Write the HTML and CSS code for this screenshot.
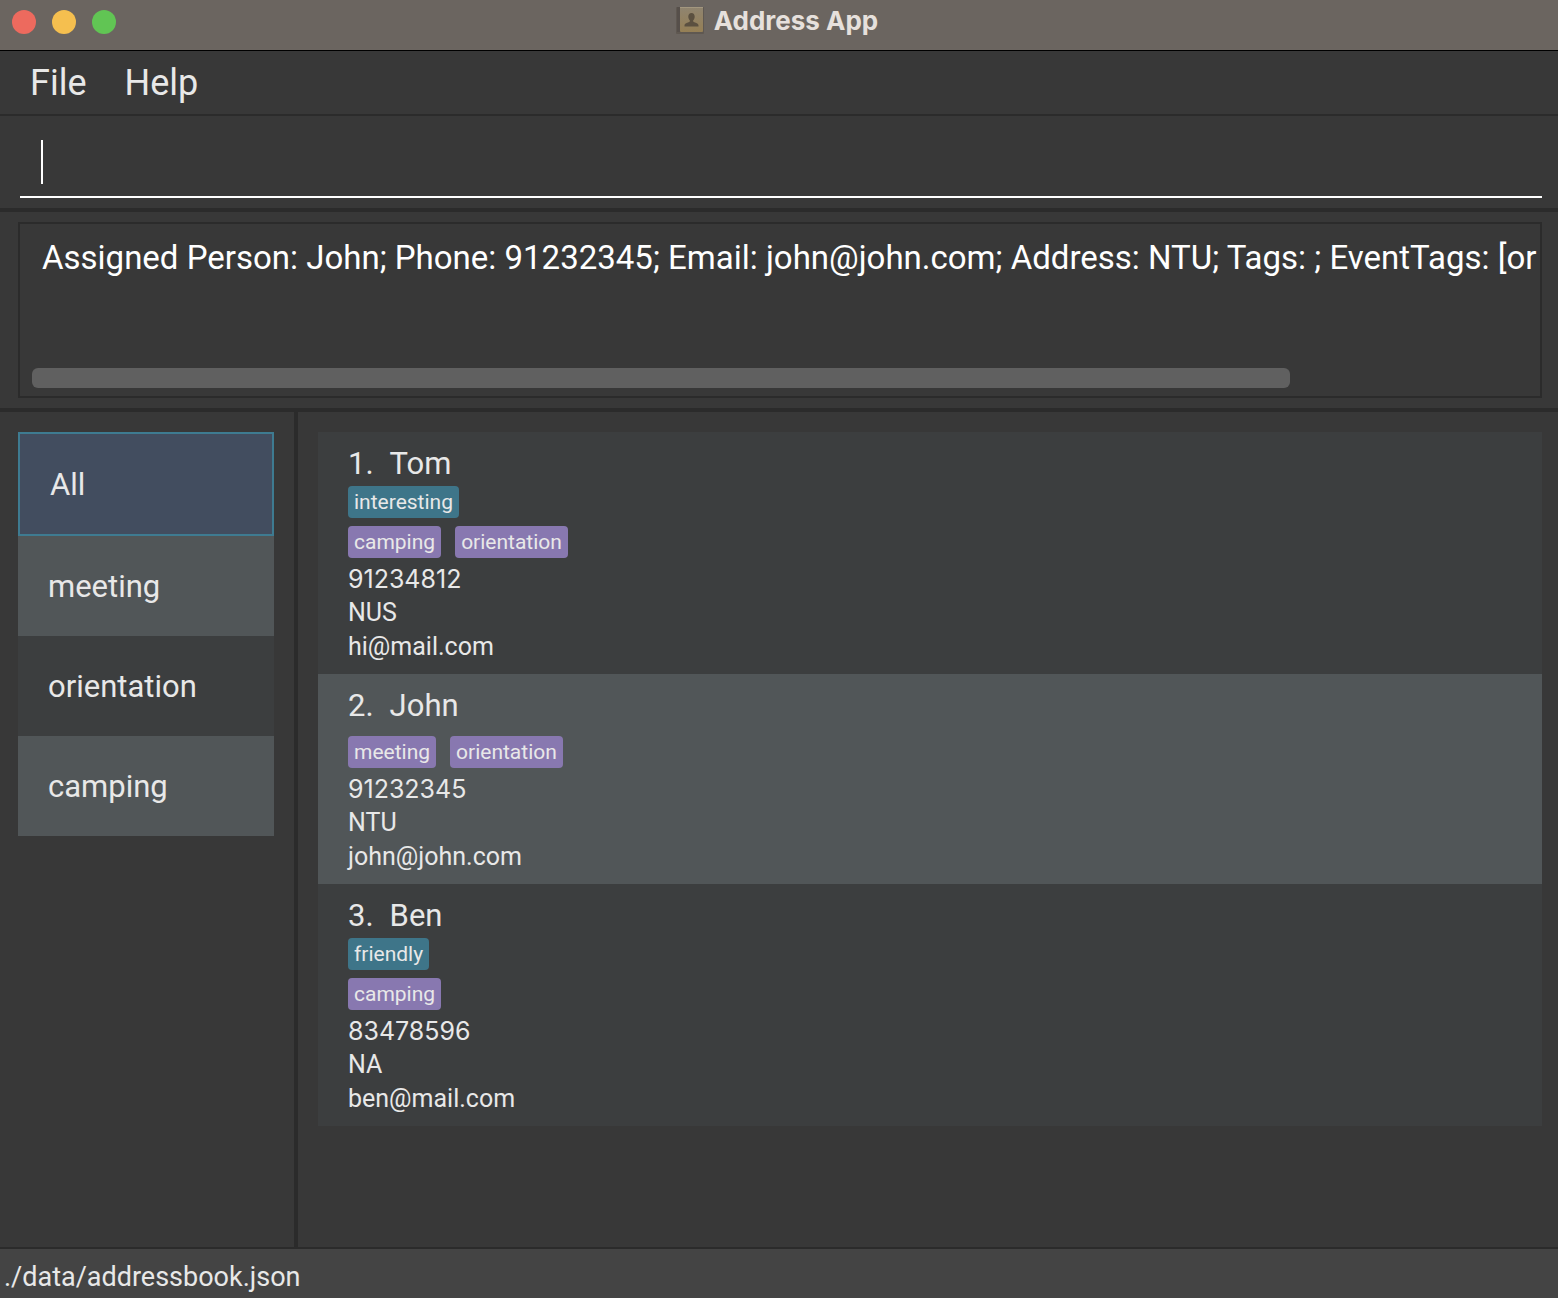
FILE: index.html
```html
<!DOCTYPE html>
<html lang="en">
<head>
<meta charset="utf-8">
<title>Address App</title>
<link rel="stylesheet" href="styles.css">
</head>
<body>
<div class="window">
  <header class="titlebar">
    <div class="lights">
      <button class="light light-close" type="button" aria-label="Close"></button>
      <button class="light light-minimise" type="button" aria-label="Minimise"></button>
      <button class="light light-zoom" type="button" aria-label="Zoom"></button>
    </div>
    <h1 class="title">
      <svg class="app-icon" viewBox="0 0 30 28" aria-hidden="true">
        <defs>
          <linearGradient id="cover" x1="0" y1="0" x2="0" y2="1">
            <stop offset="0" stop-color="#8f8470"/>
            <stop offset="1" stop-color="#957f55"/>
          </linearGradient>
        </defs>
        <rect x="0" y="0" width="28" height="27" rx="1" fill="#5f5851"/>
        <rect x="1" y="0" width="4" height="25" fill="#564f4a"/>
        <rect x="4" y="0" width="23" height="25" rx="1" fill="url(#cover)"/>
        <rect x="4" y="0" width="23" height="1" fill="#a3977f"/>
        <path d="M15.500 6c2 0 3.200 1.500 3.200 3.700 0 1.600-.7 2.800-1.500 3.600v1.300c0 .9 5.300 1.100 5.300 3.900v1H8.500v-1c0-2.800 5.300-3 5.300-3.900v-1.300c-.8-.8-1.500-2-1.500-3.600C12.300 7.500 13.500 6 15.500 6z" fill="#5b5040"/>
      </svg>
      Address App
    </h1>
  </header>

  <nav class="menubar">
    <button class="menu" type="button">File</button>
    <button class="menu" type="button">Help</button>
  </nav>

  <section class="command">
    <input class="command-input" type="text" aria-label="Command">
    <span class="caret"></span>
  </section>

  <section class="result">
    <div class="result-box">
      <p class="result-text">Assigned Person: John; Phone: 91232345; Email: john@john.com; Address: NTU; Tags: ; EventTags: [orientation, meeting]</p>
      <div class="scroll-track"><div class="scroll-thumb"></div></div>
    </div>
  </section>

  <main class="panes">
    <aside class="events">
      <ul class="list">
        <li><button class="event event-selected" type="button">All</button></li>
        <li><button class="event" type="button">meeting</button></li>
        <li><button class="event" type="button">orientation</button></li>
        <li><button class="event" type="button">camping</button></li>
      </ul>
    </aside>
    <section class="people">
      <ul class="list">
        <li class="person">
          <h2 class="name"><span>1.</span><span>Tom</span></h2>
          <div class="tags"><span class="tag">interesting</span></div>
          <div class="tags event-tags"><span class="tag">camping</span><span class="tag">orientation</span></div>
          <p class="detail phone">91234812</p>
          <p class="detail">NUS</p>
          <p class="detail">hi@mail.com</p>
        </li>
        <li class="person">
          <h2 class="name"><span>2.</span><span>John</span></h2>
          <div class="tags"></div>
          <div class="tags event-tags"><span class="tag">meeting</span><span class="tag">orientation</span></div>
          <p class="detail phone">91232345</p>
          <p class="detail">NTU</p>
          <p class="detail">john@john.com</p>
        </li>
        <li class="person">
          <h2 class="name"><span>3.</span><span>Ben</span></h2>
          <div class="tags"><span class="tag">friendly</span></div>
          <div class="tags event-tags"><span class="tag">camping</span></div>
          <p class="detail phone">83478596</p>
          <p class="detail">NA</p>
          <p class="detail">ben@mail.com</p>
        </li>
      </ul>
    </section>
  </main>

  <footer class="status">./data/addressbook.json</footer>
</div>
</body>
</html>
```
FILE: styles.css
```css
* {
  box-sizing: border-box;
}

body {
  margin: 0;
  background: #383838;
  color: #e8e8e8;
  font-family: Roboto, "Liberation Sans", sans-serif;
  font-weight: 400;
}

h1, h2, p, ul {
  margin: 0;
  padding: 0;
  font-weight: inherit;
}

button, input {
  border: 0;
  padding: 0;
  background: none;
  color: inherit;
  font: inherit;
}

.window {
  display: flex;
  flex-direction: column;
  min-height: 100vh;
}

.titlebar {
  display: grid;
  grid-template-columns: 1fr auto 1fr;
  align-items: center;
  height: 51px;
  padding: 0 12px 8px;
  border-bottom: 1px solid #000;
  background: #6b6560;
}

.lights {
  display: flex;
  gap: 16px;
  padding-top: 2px;
}

.light {
  width: 24px;
  height: 24px;
  border-radius: 50%;
}

.light-close { background: #ed6a5e; }
.light-minimise { background: #f5bf4f; }
.light-zoom { background: #61c554; }

.title {
  display: flex;
  align-items: center;
  gap: 8px;
  padding-right: 4px;
  color: #e6e0dc;
  font-family: Inter, "Liberation Sans", sans-serif;
  font-size: 26px;
  font-weight: 700;
  line-height: 32px;
}

.app-icon {
  width: 30px;
  height: 28px;
}

.menubar {
  display: flex;
  gap: 38px;
  height: 65px;
  padding: 0 30px;
  border-bottom: 2px solid #2b2b2b;
}

.menu {
  font-size: 36px;
}

.command {
  position: relative;
  padding: 12px 16px 10px 20px;
  border-bottom: 4px solid #2b2b2b;
}

.command-input {
  display: block;
  width: 100%;
  height: 70px;
  padding: 0 20px;
  border-bottom: 2px solid #fff;
  outline: 0;
  color: #fff;
  font-size: 33px;
}

.caret {
  position: absolute;
  top: 24px;
  left: 41px;
  width: 2px;
  height: 44px;
  background: #fff;
}

.result {
  padding: 10px 16px 10px 18px;
  border-bottom: 4px solid #2b2b2b;
}

.result-box {
  display: flex;
  flex-direction: column;
  justify-content: space-between;
  height: 176px;
  padding: 12px 2px 8px 12px;
  border: 2px solid #2b2b2b;
}

.result-text {
  overflow: hidden;
  padding-left: 10px;
  color: #fff;
  font-size: 33px;
  line-height: 44px;
  white-space: nowrap;
}

.scroll-track {
  padding-right: 8px;
}

.scroll-thumb {
  width: 84%;
  height: 20px;
  border-radius: 6px;
  background: #606060;
}

.panes {
  display: grid;
  grid-template-columns: 298px 1fr;
  flex: 1;
}

.events {
  padding: 20px 20px 20px 18px;
  border-right: 4px solid #2b2b2b;
}

.people {
  padding: 20px 16px 20px 20px;
}

.list {
  list-style: none;
}

.event {
  display: block;
  width: 100%;
  height: 100px;
  padding: 0 30px;
  font-size: 31px;
  text-align: left;
}

.event-selected {
  height: 104px;
  border: 2px solid #3e7b91;
}

.list li:nth-child(odd) {
  background: #3c3e3f;
}

.list li:nth-child(even) {
  background: #515658;
}

.list li .event-selected {
  background: #424d5f;
}

.person {
  padding: 10px 30px;
}

.name {
  display: flex;
  gap: 16px;
  font-size: 31px;
  line-height: 44px;
}

.tags {
  display: flex;
  gap: 14px;
}

.event-tags {
  margin: 8px 0 4px;
}

.tag {
  padding: 0 6px;
  border-radius: 4px;
  background: #3e7589;
  font-size: 21px;
  line-height: 32px;
}

.event-tags .tag {
  background: #8878b0;
}

.detail {
  font-size: 25px;
  line-height: 34px;
}

.phone {
  font-family: Inter, "Liberation Sans", sans-serif;
}

.status {
  height: 51px;
  padding: 8px 4px 0;
  border-top: 2px solid #2b2b2b;
  background: #444;
  font-size: 27px;
  line-height: 40px;
}
```
